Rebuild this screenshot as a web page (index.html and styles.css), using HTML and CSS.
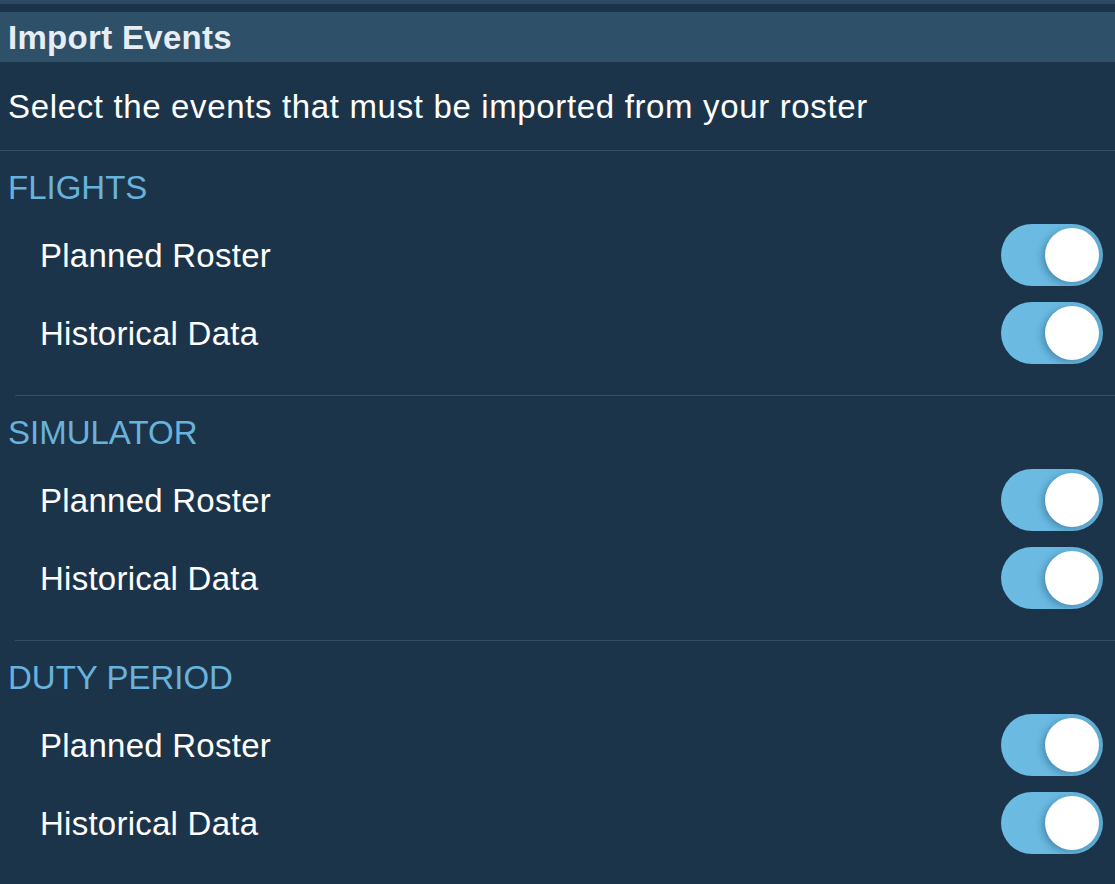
FILE: index.html
```html
<!DOCTYPE html>
<html>
<head>
<meta charset="utf-8">
<link rel="stylesheet" href="styles.css">
</head>
<body>
<div class="topband"></div>
<div class="header">Import Events</div>
<div class="intro">Select the events that must be imported from your roster</div>

<section class="group first">
  <div class="group-title">FLIGHTS</div>
  <div class="row"><span class="label">Planned Roster</span><span class="toggle on"><span class="knob"></span></span></div>
  <div class="row"><span class="label">Historical Data</span><span class="toggle on"><span class="knob"></span></span></div>
</section>

<section class="group">
  <div class="group-title">SIMULATOR</div>
  <div class="row"><span class="label">Planned Roster</span><span class="toggle on"><span class="knob"></span></span></div>
  <div class="row"><span class="label">Historical Data</span><span class="toggle on"><span class="knob"></span></span></div>
</section>

<section class="group">
  <div class="group-title">DUTY PERIOD</div>
  <div class="row"><span class="label">Planned Roster</span><span class="toggle on"><span class="knob"></span></span></div>
  <div class="row"><span class="label">Historical Data</span><span class="toggle on"><span class="knob"></span></span></div>
</section>
</body>
</html>
```
FILE: styles.css
```css
html, body {
  margin: 0;
  padding: 0;
  background: #1c344a;
  font-family: "Liberation Sans", Arial, Helvetica, sans-serif;
  color: #ffffff;
  overflow: hidden;
}

.topband {
  height: 4px;
  background: #2c4a63;
  margin-bottom: 8px;
}

.header {
  height: 50px;
  line-height: 52px;
  background: #2f5069;
  color: #e6edf4;
  font-weight: bold;
  font-size: 33px;
  letter-spacing: 0.3px;
  padding-left: 8px;
}

.intro {
  height: 88px;
  line-height: 90px;
  font-size: 33px;
  letter-spacing: 0.65px;
  padding-left: 8px;
  color: #ffffff;
}

.group {
  border-top: 1px solid #364f65;
  margin-left: 15px;
  padding-bottom: 22px;
}

.group.first {
  margin-left: 0;
}

.group-title {
  margin-top: 16px;
  height: 40px;
  line-height: 42px;
  font-size: 33px;
  color: #69b2dc;
  margin-left: -7px;
  margin-bottom: 10px;
}

.group.first .group-title {
  margin-left: 8px;
}

.row {
  height: 78px;
  display: flex;
  align-items: center;
  justify-content: space-between;
  padding-right: 12px;
}

.group.first .row {
  padding-left: 15px;
}

.label {
  font-size: 33px;
  letter-spacing: 0.25px;
  padding-left: 25px;
  color: #ffffff;
}

.toggle {
  width: 102px;
  height: 62px;
  margin-top: -3px;
  border-radius: 31px;
  background: linear-gradient(90deg, #6bbbe3 0%, #69b8e0 70%, #5eaad2 100%);
  display: flex;
  align-items: center;
  justify-content: flex-end;
  padding-right: 4px;
  box-sizing: border-box;
}

.knob {
  width: 54px;
  height: 54px;
  border-radius: 50%;
  background: #ffffff;
  box-shadow: -3px 2px 6px rgba(20, 60, 90, 0.35);
}
```
